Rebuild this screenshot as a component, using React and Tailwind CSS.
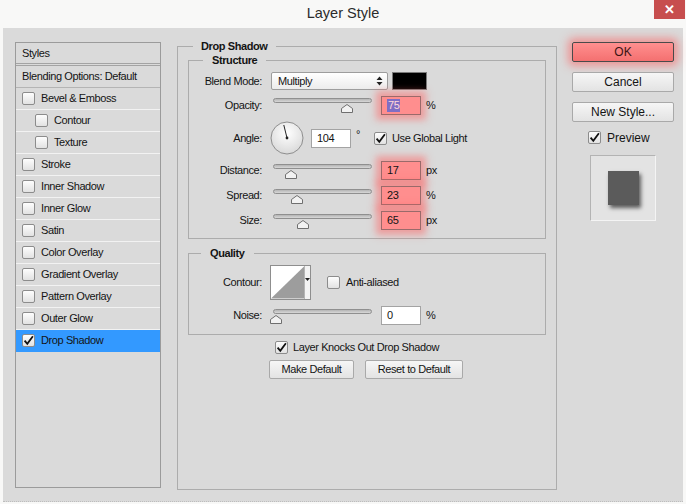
import React from "react";

// Layer Style dialog (Photoshop, Drop Shadow page)

const STYLE_ROWS = [
  { name: "Bevel & Emboss" },
  { name: "Contour", indent: true },
  { name: "Texture", indent: true },
  { name: "Stroke" },
  { name: "Inner Shadow" },
  { name: "Inner Glow" },
  { name: "Satin" },
  { name: "Color Overlay" },
  { name: "Gradient Overlay" },
  { name: "Pattern Overlay" },
  { name: "Outer Glow" },
  { name: "Drop Shadow", checked: true, active: true },
];

function Check({ checked }) {
  return (
    <span className="flex h-[13px] w-[13px] shrink-0 items-center justify-center rounded-[2px] border border-[#8c8c8c] bg-gradient-to-b from-[#fdfdfd] to-[#e2e2e2]">
      {checked && (
        <svg width="11" height="11" viewBox="0 0 11 11">
          <path d="M1.6 5.6 L4.3 8.8 L9.9 1.3" fill="none" stroke="#111" strokeWidth="1.8" />
        </svg>
      )}
    </span>
  );
}

function Slider({ pos }) {
  return (
    <div className="relative h-[18px] w-[99px] shrink-0">
      <div className="mt-[4px] h-[5px] w-full rounded-full border border-[#8f8f8f] bg-gradient-to-b from-[#b4b4b4] to-[#d8d8d8]" />
      <svg
        className="absolute top-[6px]"
        style={{ left: pos - 6 }}
        width="12"
        height="9"
        viewBox="0 0 12 9"
      >
        <path d="M6 0.5 L11.5 4.5 L11.5 8.5 L0.5 8.5 L0.5 4.5 Z" fill="#f2f2f2" stroke="#6f6f6f" />
      </svg>
    </div>
  );
}

function Field({ value, hot, selected }) {
  return (
    <div
      className={`flex h-[19px] w-[40px] shrink-0 items-center border pl-[5px] ${
        hot
          ? "border-[#9a6a6a] bg-[#ff8e8e] shadow-[0_0_7px_5px_rgba(255,95,95,0.5)]"
          : "border-[#a3a3a3] bg-white"
      }`}
    >
      {selected ? (
        <span className="bg-[#7f6ec4] px-[1px] leading-[13px] text-[#ffd9d9]">{value}</span>
      ) : (
        value
      )}
    </div>
  );
}

function Label({ children }) {
  return <div className="w-[73px] shrink-0 text-right">{children}</div>;
}

function SliderRow({ label, pos, value, unit, hot, selected, className }) {
  return (
    <div className={`flex h-[19px] items-center ${className}`}>
      <Label>{label}</Label>
      <div className="ml-[11px]">
        <Slider pos={pos} />
      </div>
      <div className="ml-[9px]">
        <Field value={value} hot={hot} selected={selected} />
      </div>
      <span className="ml-[5px]">{unit}</span>
    </div>
  );
}

function Button({ children, ok, className = "h-[20px] text-[12px] tracking-normal" }) {
  return (
    <button
      className={`flex w-full items-center justify-center rounded-[2px] border ${className} ${
        ok
          ? "border-[#4a4a4a] bg-gradient-to-b from-[#ff8f8f] to-[#f47070] text-[#3a1414] shadow-[0_0_8px_4px_rgba(255,80,80,0.5)]"
          : "border-[#a9a9a9] bg-gradient-to-b from-[#f6f6f6] to-[#e3e3e3]"
      }`}
    >
      {children}
    </button>
  );
}

export default function App() {
  return (
    <div className="h-[504px] w-[686px] bg-[#f8f8f7] font-['Liberation_Sans',Arial,sans-serif] text-[11px] tracking-[-0.4px] text-[#141414]">
      {/* Title bar */}
      <div className="relative flex h-[28px] items-center justify-center tracking-normal">
        <span className="text-[14.5px] text-[#2b2b2b]">Layer Style</span>
        <div className="absolute right-[1px] top-0 flex h-[19px] w-[31px] items-center justify-center bg-[#c74e4e] text-[13px] font-bold text-white">
          ✕
        </div>
      </div>

      <div className="mx-[3px] flex h-[474px] items-start border-b border-dotted border-[#bdbdbd] bg-[#dadada] pl-[12px] pt-[14px]">
        {/* Styles list */}
        <div className="flex h-[446px] w-[146px] shrink-0 flex-col border border-[#9b9b9b]">
          <div className="flex h-[21px] items-center border-b border-[#a3a3a3] pl-[6px]">Styles</div>
          <div className="h-[2px] border-b border-[#a3a3a3]" />
          <div className="flex h-[22px] items-center border-b border-[#b4b4b4] pl-[6px]">
            Blending Options: Default
          </div>
          {STYLE_ROWS.map((r) => (
            <div
              key={r.name}
              className={`flex h-[22px] items-center gap-[6px] border-b ${
                r.active ? "border-[#3399ff] bg-[#3399ff]" : "border-[#f2f2f2]"
              } ${r.indent ? "pl-[19px]" : "pl-[6px]"}`}
            >
              <Check checked={r.checked} />
              <span>{r.name}</span>
            </div>
          ))}
        </div>

        {/* Drop Shadow */}
        <fieldset className="ml-[16px] mt-[-3px] h-[451px] w-[380px] shrink-0 border border-[#acacac] px-[10px]">
          <legend className="ml-[5px] px-[8px] font-bold leading-[14px]">Drop Shadow</legend>

          <fieldset className="border border-[#acacac] pb-[8px]">
            <legend className="ml-[14px] px-[9px] font-bold leading-[14px]">Structure</legend>

            <div className="mt-[5px] flex h-[18px] items-center">
              <Label>Blend Mode:</Label>
              <div className="ml-[9px] flex h-[18px] w-[117px] items-center justify-between rounded-[2px] border border-[#9d9d9d] bg-gradient-to-b from-white to-[#ececec] pl-[6px] pr-[4px]">
                <span>Multiply</span>
                <svg width="7" height="10" viewBox="0 0 7 10">
                  <path d="M3.5 0.5 L6.5 4 L0.5 4 Z M3.5 9.5 L6.5 6 L0.5 6 Z" fill="#222" />
                </svg>
              </div>
              <div className="ml-[4px] h-[18px] w-[35px] border border-[#7a7a7a] bg-black" />
            </div>

            <SliderRow label="Opacity:" pos={74} value="75" unit="%" hot selected className="mt-[5px] h-[20px]" />

            <div className="mt-[6px] flex h-[34px] items-center">
              <Label>Angle:</Label>
              <svg className="ml-[8px] shrink-0" width="34" height="34" viewBox="0 0 34 34">
                <defs>
                  <radialGradient id="dial" cx="50%" cy="35%" r="65%">
                    <stop offset="0%" stopColor="#ffffff" />
                    <stop offset="100%" stopColor="#d9d9d9" />
                  </radialGradient>
                </defs>
                <circle cx="17" cy="17" r="16" fill="url(#dial)" stroke="#8e8e8e" />
                <line x1="17" y1="17" x2="13.8" y2="4" stroke="#222" strokeWidth="1" />
                <circle cx="17" cy="17" r="1.4" fill="#222" />
              </svg>
              <div className="ml-[7px]">
                <Field value="104" />
              </div>
              <span className="ml-[5px] mt-[-8px]">°</span>
              <div className="ml-[14px]">
                <Check checked />
              </div>
              <span className="ml-[5px]">Use Global Light</span>
            </div>

            <SliderRow label="Distance:" pos={18} value="17" unit="px" hot className="mt-[6px]" />
            <SliderRow label="Spread:" pos={24} value="23" unit="%" hot className="mt-[6px]" />
            <SliderRow label="Size:" pos={30} value="65" unit="px" hot className="mt-[6px]" />
          </fieldset>

          <fieldset className="mt-[7px] border border-[#acacac] pb-[9px]">
            <legend className="ml-[12px] px-[9px] font-bold leading-[14px]">Quality</legend>

            <div className="mt-[5px] flex h-[35px] items-center">
              <Label>Contour:</Label>
              <div className="ml-[8px] flex h-[35px] w-[41px] border border-[#8e8e8e] bg-white">
                <svg width="34" height="33" viewBox="0 0 34 33">
                  <path d="M0 33 L34 0 L34 33 Z" fill="#9d9d9d" />
                </svg>
                <div className="flex flex-1 justify-center border-l border-[#b5b5b5] bg-[#f3f3f3] pt-[12px]">
                  <svg width="5" height="3" viewBox="0 0 5 3">
                    <path d="M0 0 L5 0 L2.5 3 Z" fill="#222" />
                  </svg>
                </div>
              </div>
              <div className="ml-[16px]">
                <Check />
              </div>
              <span className="ml-[6px]">Anti-aliased</span>
            </div>

            <SliderRow label="Noise:" pos={3} value="0" unit="%" className="mt-[6px]" />
          </fieldset>

          <div className="ml-[87px] mt-[4px] flex items-center gap-[5px]">
            <Check checked />
            <span>Layer Knocks Out Drop Shadow</span>
          </div>
          <div className="ml-[81px] mt-[4px] flex gap-[11px]">
            <div className="w-[85px]">
              <Button className="h-[19px]">Make Default</Button>
            </div>
            <div className="w-[98px]">
              <Button className="h-[19px]">Reset to Default</Button>
            </div>
          </div>
        </fieldset>

        {/* Buttons + preview */}
        <div className="ml-[15px] flex w-[102px] shrink-0 flex-col">
          <Button ok>OK</Button>
          <div className="mt-[10px] flex flex-col gap-[10px]">
            <Button>Cancel</Button>
            <Button>New Style...</Button>
          </div>
          <div className="ml-[16px] mt-[9px] flex h-[13px] items-center gap-[6px] text-[12px] tracking-normal">
            <Check checked />
            <span>Preview</span>
          </div>
          <div className="ml-[18px] mt-[11px] flex h-[66px] w-[66px] items-center justify-center border border-[#b3b3b3] border-b-[#f4f4f4] border-r-[#f4f4f4] bg-[#e3e3e3]">
            <div className="h-[34px] w-[31px] bg-[#5b5b5b] shadow-[2px_3px_4px_rgba(0,0,0,0.6)]" />
          </div>
        </div>
      </div>
    </div>
  );
}
